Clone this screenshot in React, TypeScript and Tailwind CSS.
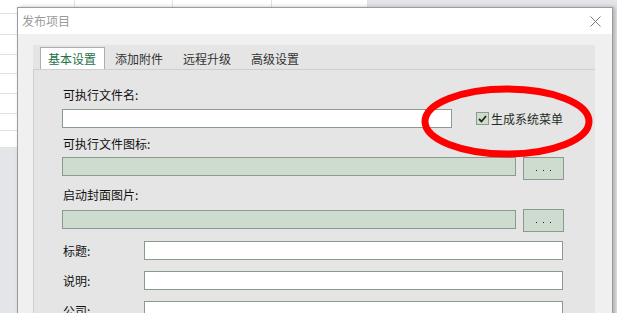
import React from "react";

const font = { fontFamily: '"Microsoft YaHei", "Noto Sans CJK SC", sans-serif' };

const sheetRows = [14, 21, 20, 19, 20, 20, 17, 17];
const sheetCols = [75, 98, 99, 96];

function Sheet() {
  return (
    <div className="flex w-[368px] flex-col bg-white">
      {sheetRows.map((h, i) => (
        <div key={i} className="flex border-b border-[#e2e2e2]" style={{ height: h }}>
          {sheetCols.map((w, j) => (
            <div key={j} className="border-r border-[#e2e2e2]" style={{ width: w }} />
          ))}
        </div>
      ))}
    </div>
  );
}

function Field({ className = "", disabled = false }: { className?: string; disabled?: boolean }) {
  return (
    <div
      className={`h-[19px] border border-[#8b9b8b] ${disabled ? "bg-[#cedccf]" : "bg-white"} ${className}`}
    />
  );
}

function DotsButton() {
  return (
    <div className="ml-[7px] flex h-[23px] w-[41px] items-center justify-center gap-[6px] border border-[#8b9b8b] bg-[#cedccf] pt-[3px]">
      <span className="h-[1px] w-[1px] bg-[#222]" />
      <span className="h-[1px] w-[1px] bg-[#222]" />
      <span className="h-[1px] w-[1px] bg-[#222]" />
    </div>
  );
}

const tabs = ["添加附件", "远程升级", "高级设置"];

export default function App() {
  return (
    <div className="relative h-[313px] w-[617px] overflow-hidden bg-[#e4e5e8]" style={font}>
      <Sheet />

      {/* dialog window */}
      <div className="absolute left-[17px] top-[7px] flex h-[400px] w-[596px] flex-col border border-[#9c9c9c] bg-[#f0f0f0] shadow-[2px_0_4px_rgba(0,0,0,0.25)]">
        <div className="flex h-[26px] items-center justify-between bg-white pl-[4px] pr-[11px]">
          <span className="text-[12px] leading-none text-[#9a9a9a]">发布项目</span>
          <svg width="11" height="11" viewBox="0 0 11 11">
            <path d="M0.5 0.5 L10.5 10.5 M10.5 0.5 L0.5 10.5" stroke="#7a7a7a" strokeWidth="1" />
          </svg>
        </div>

        <div className="flex flex-1 flex-col pl-[15px] pr-[17px] pt-[11px]">
          <div className="flex flex-1 flex-col bg-[#e5e5e5]">
            {/* tab headers */}
            <div className="flex h-[24px] items-end pl-[7px] text-[12px] leading-[16px]">
              <div className="flex h-[22px] w-[65px] items-center border border-b-0 border-[#adadad] bg-white pl-[7px] text-[#217346]">
                基本设置
              </div>
              {tabs.map((t) => (
                <div key={t} className="flex h-[20px] w-[68px] items-center pl-[10px] text-[#333]">
                  {t}
                </div>
              ))}
            </div>

            {/* tab page */}
            <div className="flex flex-1 flex-col border-l border-t border-[#cfcfcf] pl-[28px] text-[12px] leading-[16px] text-[#111]">
              <div className="mt-[17px] pl-[1px]">可执行文件名:</div>
              <div className="mt-[6px] flex items-center">
                <Field className="w-[390px]" />
                <div className="ml-[24px] flex items-center">
                  <div className="flex h-[13px] w-[13px] items-center justify-center border border-[#8b9b8b] bg-[#cedccf]">
                    <svg width="9" height="8" viewBox="0 0 9 8">
                      <path d="M1 4 L3.5 6.5 L8 1" fill="none" stroke="#1b2a1b" strokeWidth="1.8" />
                    </svg>
                  </div>
                  <span className="ml-[2px] text-[#1d2e1f]">生成系统菜单</span>
                </div>
              </div>

              <div className="mt-[8px] pl-[1px]">可执行文件图标:</div>
              <div className="mt-[5px] flex items-start">
                <Field className="w-[454px]" disabled />
                <DotsButton />
              </div>

              <div className="mt-[7px] pl-[1px]">启动封面图片:</div>
              <div className="mt-[6px] flex items-start">
                <Field className="mt-[1px] w-[454px]" disabled />
                <DotsButton />
              </div>

              {["标题:", "说明:", "公司:"].map((l, i) => (
                <div key={l} className={`${i === 0 ? "mt-[9px]" : "mt-[11px]"} flex items-center`}>
                  <span className="w-[82px] pl-[1px]">{l}</span>
                  <Field className="w-[419px]" />
                </div>
              ))}
            </div>
          </div>
        </div>
      </div>

      {/* red annotation ellipse */}
      <svg className="absolute left-[418px] top-[82px]" width="178" height="80" viewBox="0 0 178 80">
        <ellipse cx="89" cy="39.5" rx="82" ry="32.5" fill="none" stroke="#ff0000" strokeWidth="7" />
      </svg>
    </div>
  );
}
